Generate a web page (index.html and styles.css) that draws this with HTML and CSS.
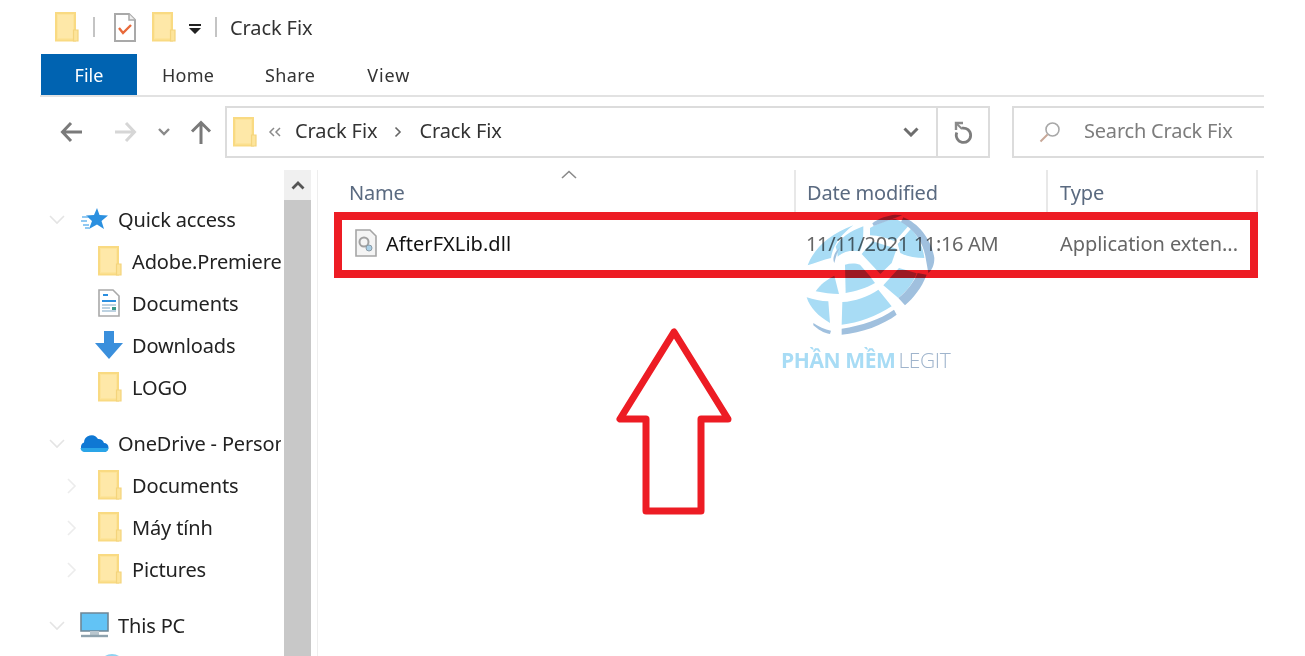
FILE: index.html
```html
<!DOCTYPE html>
<html lang="en">
<head>
  <meta charset="UTF-8">
  <meta name="viewport" content="width=device-width, initial-scale=1.0">
  <title>Crack Fix</title>
  <link rel="stylesheet" href="styles.css">
</head>
<body>
  <svg class="defs" width="0" height="0">
    <symbol id="folder" viewBox="0 0 24 30">
      <path d="M1 1H20V28.500H1Z" fill="#fde49a" stroke="#f9da82" stroke-width="2"/>
      <path d="M3 3H18V26H3Z" fill="#fee8a8"/>
      <path d="M18.500 18H23V29H18.500Z" fill="#fde49a" stroke="#f4d47c" stroke-width="1.200"/>
    </symbol>
  </svg>

  <div class="window">
    <div class="titlebar">
      <svg class="folder-icon qa-first"><use href="#folder"/></svg>
      <span class="qa-sep"></span>
      <svg class="qa-doc" width="22" height="29" viewBox="0 0 22 29">
        <path d="M1 1H15L21 7V28H1Z" fill="#fff" stroke="#a9a9a9" stroke-width="2"/>
        <path d="M15 1V7H21" fill="#eee" stroke="#a9a9a9" stroke-width="1.5"/>
        <path d="M5 15L9 20L17 12" fill="none" stroke="#e8693a" stroke-width="2.4"/>
      </svg>
      <svg class="folder-icon qa-second"><use href="#folder"/></svg>
      <svg class="qa-drop" width="12" height="11" viewBox="0 0 12 11">
        <path d="M0 0H12V2H0Z M0 4H12L6 10Z" fill="#222"/>
      </svg>
      <span class="qa-sep qa-sep-last"></span>
      <span class="title-text">Crack Fix</span>
    </div>

    <div class="tabs">
      <span class="tab tab-file">File</span>
      <span class="tab tab-home">Home</span>
      <span class="tab tab-share">Share</span>
      <span class="tab tab-view">View</span>
    </div>

    <div class="navbar">
      <div class="nav-buttons">
        <svg width="24" height="22" viewBox="0 0 24 22"><path d="M22 11H3M11 2L2.500 11L11 20" fill="none" stroke="#7a7a7a" stroke-width="3"/></svg>
        <svg class="nav-forward" width="24" height="22" viewBox="0 0 24 22"><path d="M2 11H21M13 2L21.500 11L13 20" fill="none" stroke="#d6d6d6" stroke-width="3"/></svg>
        <svg class="nav-recent" width="12" height="8" viewBox="0 0 12 8"><path d="M1 1L6 6L11 1" fill="none" stroke="#8a8a8a" stroke-width="2.400"/></svg>
        <svg class="nav-up" width="22" height="24" viewBox="0 0 22 24"><path d="M11 24V3M2 11.500L11 2.500L20 11.500" fill="none" stroke="#7a7a7a" stroke-width="3"/></svg>
      </div>
      <div class="address">
        <svg class="folder-icon"><use href="#folder"/></svg>
        <span class="crumb-more">
          <svg width="14" height="10" viewBox="0 0 14 10"><path d="M6 1L2 5L6 9M12 1L8 5L12 9" fill="none" stroke="#8a8a8a" stroke-width="1.500"/></svg>
        </span>
        <span class="crumb">Crack Fix</span>
        <svg class="crumb-arrow" width="8" height="12" viewBox="0 0 8 12"><path d="M1.500 1.500L6 6L1.500 10.500" fill="none" stroke="#666" stroke-width="1.600"/></svg>
        <span class="crumb">Crack Fix</span>
        <svg class="address-drop" width="16" height="10" viewBox="0 0 16 10"><path d="M1.500 1.500L8 8L14.500 1.500" fill="none" stroke="#6d6d6d" stroke-width="3"/></svg>
        <span class="refresh">
          <svg width="20" height="23" viewBox="0 0 20 23">
            <path d="M9 7.200A7.200 7.200 0 1 1 3.800 11.500" fill="none" stroke="#7d7d7d" stroke-width="2.800"/>
            <path d="M3 9V2H10" fill="none" stroke="#8a8a8a" stroke-width="2.400"/>
            <path d="M3.500 2.500L9 8" stroke="#8a8a8a" stroke-width="2"/>
          </svg>
        </span>
      </div>
      <div class="search">
        <svg width="22" height="22" viewBox="0 0 22 22">
          <circle cx="13.500" cy="8.500" r="6.500" fill="none" stroke="#a8a8a8" stroke-width="1.600"/>
          <path d="M8.500 13.500L1.500 20.500" stroke="#c8a898" stroke-width="2"/>
        </svg>
        <span>Search Crack Fix</span>
      </div>
    </div>

    <div class="content">
      <div class="sidebar">
        <div class="tree">
          <div class="tree-row group">
            <svg class="twisty" width="16" height="10" viewBox="0 0 16 10"><path d="M1 1L8 8L15 1" fill="none" stroke="#e4e4e4" stroke-width="1.600"/></svg>
            <svg class="root-icon" width="29" height="24" viewBox="0 0 29 24">
              <path d="M17 1L19.500 8L28 8.500L21.500 14L24 22L17 17.500L9 22L12 14L6 8.500L14 8Z" fill="#2b90e0"/>
              <path d="M2 10H8M1 14H7M3 18H9M5 21H9" stroke="#6db8ee" stroke-width="1.400"/>
            </svg>
            <span>Quick access</span>
          </div>
          <div class="tree-row child">
            <svg class="folder-icon"><use href="#folder"/></svg>
            <span>Adobe.Premiere</span>
          </div>
          <div class="tree-row child">
            <svg class="child-icon" width="22" height="28" viewBox="0 0 22 28">
              <path d="M1 1H15L21 7V27H1Z" fill="#fff" stroke="#a9a9a9" stroke-width="1.600"/>
              <path d="M5 6H10M4 12H18" stroke="#2b8fe0" stroke-width="2"/>
              <path d="M4 16H18M4 19H12M4 22H18" stroke="#a8c4d8" stroke-width="1.400"/>
              <path d="M14 18H18V21H14Z" fill="#3b9a8a"/>
            </svg>
            <span>Documents</span>
          </div>
          <div class="tree-row child">
            <svg class="child-icon arrow-icon" width="28" height="28" viewBox="0 0 28 28">
              <path d="M9 0H19V12H28L14 28L0 12H9Z" fill="#3a8fdc"/>
            </svg>
            <span>Downloads</span>
          </div>
          <div class="tree-row child">
            <svg class="folder-icon"><use href="#folder"/></svg>
            <span>LOGO</span>
          </div>
          <div class="tree-row group group-gap">
            <svg class="twisty" width="16" height="10" viewBox="0 0 16 10"><path d="M1 1L8 8L15 1" fill="none" stroke="#e4e4e4" stroke-width="1.600"/></svg>
            <svg class="root-icon" width="29" height="20" viewBox="0 0 29 20">
              <path d="M5 19A5 5 0 0 1 4 9.500A7.500 7.500 0 0 1 18 6A6 6 0 0 1 24 10A4.500 4.500 0 0 1 24 19Z" fill="#0f78d4"/>
              <path d="M0.500 15A4.500 4.500 0 0 0 5 19H24A4.500 4.500 0 0 0 28.500 15Z" fill="#2aa5e8"/>
            </svg>
            <span>OneDrive - Personal</span>
          </div>
          <div class="tree-row child">
            <svg class="twisty-child" width="10" height="16" viewBox="0 0 10 16"><path d="M1 1L8 8L1 15" fill="none" stroke="#ececec" stroke-width="1.600"/></svg>
            <svg class="folder-icon"><use href="#folder"/></svg>
            <span>Documents</span>
          </div>
          <div class="tree-row child">
            <svg class="twisty-child" width="10" height="16" viewBox="0 0 10 16"><path d="M1 1L8 8L1 15" fill="none" stroke="#ececec" stroke-width="1.600"/></svg>
            <svg class="folder-icon"><use href="#folder"/></svg>
            <span>Máy tính</span>
          </div>
          <div class="tree-row child">
            <svg class="twisty-child" width="10" height="16" viewBox="0 0 10 16"><path d="M1 1L8 8L1 15" fill="none" stroke="#ececec" stroke-width="1.600"/></svg>
            <svg class="folder-icon"><use href="#folder"/></svg>
            <span>Pictures</span>
          </div>
          <div class="tree-row group group-gap">
            <svg class="twisty" width="16" height="10" viewBox="0 0 16 10"><path d="M1 1L8 8L15 1" fill="none" stroke="#e4e4e4" stroke-width="1.600"/></svg>
            <svg class="root-icon" width="29" height="27" viewBox="0 0 29 27">
              <path d="M1 1H28V19H1Z" fill="#62c3f5" stroke="#6f8796" stroke-width="1.600"/>
              <path d="M10 19H19V23H10Z" fill="#b9c6ce"/>
              <path d="M1 24H28" stroke="#8ea2ae" stroke-width="2.400"/>
            </svg>
            <span>This PC</span>
          </div>
          <div class="tree-row child">
            <svg class="child-icon" width="28" height="28" viewBox="0 0 28 28"><circle cx="14" cy="14" r="13" fill="#8fd3f2"/></svg>
          </div>
        </div>
        <div class="scrollbar">
          <div class="scroll-up">
            <svg width="14" height="9" viewBox="0 0 14 9"><path d="M1.500 7.500L7 2L12.500 7.500" fill="none" stroke="#555" stroke-width="2.800"/></svg>
          </div>
        </div>
      </div>

      <div class="files">
        <div class="sort-caret">
          <svg width="16" height="9" viewBox="0 0 16 9"><path d="M1 8L8 1.500L15 8" fill="none" stroke="#8a8a8a" stroke-width="1.600"/></svg>
        </div>
        <div class="file-head">
          <span class="col col-name">Name</span>
          <span class="col col-date">Date modified</span>
          <span class="col col-type">Type</span>
        </div>
        <div class="file-row">
          <span class="col col-name file-name">
            <svg width="22" height="28" viewBox="0 0 22 28">
              <path d="M1 1H15L21 7V27H1Z" fill="#f4f4f4" stroke="#a5a5a5" stroke-width="1.600"/>
              <circle cx="9" cy="13" r="4.500" fill="none" stroke="#a0a0a0" stroke-width="2"/>
              <circle cx="14" cy="19" r="3" fill="#a9cfe6" stroke="#8a9aa6"/>
            </svg>
            AfterFXLib.dll
          </span>
          <span class="col col-date">11/11/2021 11:16 AM</span>
          <span class="col col-type">Application exten...</span>
        </div>
      </div>
    </div>
  </div>

  <div class="highlight"></div>

  <svg class="big-arrow" width="118" height="190" viewBox="0 0 118 190">
    <path d="M59 5L5 92H31V184H86V92H113Z" fill="none" stroke="#ed1c24" stroke-width="7" stroke-linejoin="round"/>
  </svg>

  <div class="watermark">
    <svg width="140" height="130" viewBox="0 0 420 390">
      <g fill="#a8dcf5">
        <path d="M38 172C55 125 100 80 175 52C145 75 115 105 108 150C85 155 60 165 38 172Z"/>
        <path d="M122 116C135 90 165 70 205 55C205 80 205 110 195 130C170 125 145 130 128 146C128 136 125 126 122 116Z"/>
        <path d="M225 60C250 45 280 35 300 32L342 52L300 100C275 90 250 82 225 82Z"/>
        <path d="M308 108L348 62C370 85 385 120 388 150C360 150 335 145 316 135Z"/>
        <path d="M200 138L232 100L305 122L290 165L256 198Z"/>
        <path d="M265 232L312 180L365 196C355 225 335 250 310 270Z"/>
        <path d="M150 170C165 165 182 165 195 170L225 205L240 225C215 240 180 250 152 255Z"/>
        <path d="M62 250C75 230 95 215 118 203L132 258C110 258 85 255 62 250Z"/>
        <path d="M35 268C55 275 78 280 100 280L105 345C70 325 45 300 35 268Z"/>
        <path d="M142 282C180 280 220 265 250 245L290 295C245 325 190 345 140 350Z"/>
      </g>
      <g fill="#a0c0de">
        <path d="M325 28C370 45 410 95 418 150C418 170 412 185 400 195L392 150C385 105 360 65 318 42Z"/>
        <path d="M368 195L395 200C380 240 355 270 330 292L310 270C335 250 355 225 368 195Z"/>
        <path d="M140 362C200 352 255 335 297 305L305 320C265 350 200 375 140 380Z"/>
        <path d="M55 345C70 355 90 365 108 368L105 378C85 375 70 365 55 352Z"/>
        <path d="M232 46C250 30 280 22 300 20L322 22L306 28L236 54Z"/>
        <path d="M135 118C115 135 112 155 118 165C122 150 125 135 135 118Z"/>
      </g>
    </svg>
    <div class="wm-text"><b>PHẦN MỀM</b><span>LEGIT</span></div>
  </div>
</body>
</html>
```

FILE: styles.css
```css
html, body {
  margin: 0;
  height: 656px;
  overflow: hidden;
  background-color: white;
}
body {
  font-family: "Noto Sans", "Open Sans", sans-serif;
  color: #222;
  position: relative;
}
.defs {
  position: absolute;
}
.window {
  margin-left: 40px;
  width: 1224px;
  height: 656px;
  overflow: hidden;
  filter: blur(0.4px);
}
.folder-icon {
  width: 24px;
  height: 30px;
  flex: none;
}

/* title bar */
.titlebar {
  height: 54px;
  display: flex;
  align-items: center;
  font-size: 20px;
}
.qa-first {
  margin-left: 15px;
}
.qa-sep {
  width: 2px;
  height: 20px;
  background-color: #c4c4c4;
  margin-left: 14px;
}
.qa-doc {
  margin-left: 19px;
}
.qa-second {
  margin-left: 16px;
}
.qa-drop {
  margin-left: 13px;
  margin-top: 4px;
}
.qa-sep-last {
  margin-left: 14px;
}
.title-text {
  margin-left: 13px;
  letter-spacing: -0.1px;
  color: #333;
}

/* ribbon tabs */
.tabs {
  height: 41px;
  border-bottom: 2px solid #e2e2e2;
  display: flex;
  align-items: center;
  font-size: 18px;
  color: #333;
}
.tab-file {
  width: 96px;
  height: 41px;
  margin-left: 1px;
  background-color: #0063b1;
  color: white;
  display: flex;
  justify-content: center;
  align-items: center;
}
.tab-home {
  margin-left: 25px;
  letter-spacing: 0.2px;
}
.tab-share {
  margin-left: 51px;
  letter-spacing: 0.4px;
}
.tab-view {
  margin-left: 52px;
  letter-spacing: 0.9px;
}

/* navigation row */
.navbar {
  height: 72px;
  display: flex;
  align-items: center;
  margin-top: -1px;
  font-size: 20px;
}
.nav-buttons {
  width: 185px;
  flex: none;
  display: flex;
  align-items: center;
  padding-left: 20px;
  box-sizing: border-box;
}
.nav-forward {
  margin-left: 29px;
}
.nav-recent {
  margin-left: 21px;
}
.nav-up {
  margin-left: 20px;
}
.address {
  width: 765px;
  height: 52px;
  flex: none;
  box-sizing: border-box;
  border: 2px solid #dcdcdc;
  display: flex;
  align-items: center;
  padding-left: 6px;
  letter-spacing: -0.1px;
  color: #333;
}
.crumb {
  margin-top: -4px;
}
.crumb-more {
  display: flex;
  margin: 0 13px 0 11px;
}
.crumb-arrow {
  margin: 0 17px 0 17px;
}
.address-drop {
  margin-left: auto;
  margin-right: 17px;
}
.refresh {
  width: 50px;
  height: 48px;
  border-left: 2px solid #dcdcdc;
  display: flex;
  justify-content: center;
  align-items: center;
}
.search {
  width: 260px;
  height: 52px;
  margin-left: 22px;
  flex: none;
  box-sizing: border-box;
  border: 2px solid #dcdcdc;
  display: flex;
  align-items: center;
  padding-left: 25px;
  letter-spacing: -0.2px;
  color: #7d7d7d;
}
.search span {
  margin-left: 23px;
  margin-top: -4px;
}

/* main area */
.content {
  display: flex;
  height: 600px;
  margin-top: 2px;
  font-size: 20px;
}
.sidebar {
  width: 277px;
  flex: none;
  display: flex;
  border-right: 1px solid #eeeeee;
}
.tree {
  width: 241px;
  margin-right: 3px;
  flex: none;
  overflow: hidden;
  padding-top: 28px;
}
.tree-row {
  height: 42px;
  display: flex;
  align-items: center;
  white-space: nowrap;
  position: relative;
  letter-spacing: -0.15px;
  color: #222;
}
.group {
  padding-left: 40px;
}
.group-gap {
  margin-top: 14px;
}
.child {
  padding-left: 58px;
}
.child span {
  position: absolute;
  left: 92px;
}
.group span {
  position: absolute;
  left: 78px;
}
.twisty {
  position: absolute;
  left: 9px;
  top: 17px;
}
.twisty-child {
  position: absolute;
  left: 27px;
  top: 14px;
}
.child-icon {
  flex: none;
}
.arrow-icon {
  margin-left: -3px;
}
.scrollbar {
  width: 27px;
  flex: none;
  background-color: #c8c8c8;
}
.scroll-up {
  height: 30px;
  background-color: #f0f0f0;
  display: flex;
  justify-content: center;
  align-items: center;
}

/* file list */
.files {
  width: 941px;
  position: relative;
  color: #666;
}
.sort-caret {
  position: absolute;
  left: 243px;
  top: 0;
  display: flex;
}
.file-head {
  height: 42px;
  display: flex;
  align-items: stretch;
  letter-spacing: -0.2px;
  color: #5a6a80;
  padding-left: 20px;
}
.file-head .col {
  display: flex;
  align-items: center;
  padding-top: 3px;
  box-sizing: border-box;
  border-right: 2px solid #e8e8e8;
}
.file-head .col-name {
  width: 458px;
  padding-left: 11px;
}
.file-row {
  height: 62px;
  display: flex;
  align-items: center;
  padding-left: 20px;
  letter-spacing: -0.35px;
}
.col-name {
  width: 458px;
  flex: none;
}
.col-date {
  width: 252px;
  flex: none;
  padding-left: 10px;
  box-sizing: border-box;
}
.file-head .col-date {
  padding-left: 11px;
}
.col-type {
  width: 210px;
  flex: none;
  padding-left: 12px;
  box-sizing: border-box;
  letter-spacing: -0.05px;
}
.file-name {
  display: flex;
  align-items: center;
  gap: 9px;
  padding-left: 17px;
  box-sizing: border-box;
  color: #111;
  letter-spacing: 0.05px;
}

/* annotations on top of the screenshot */
.highlight {
  position: absolute;
  left: 334px;
  top: 212px;
  width: 924px;
  height: 66px;
  box-sizing: border-box;
  border: 8px solid #ed1c24;
}
.big-arrow {
  position: absolute;
  left: 615px;
  top: 327px;
}
.watermark {
  position: absolute;
  left: 795px;
  top: 208px;
  width: 170px;
  mix-blend-mode: multiply;
}
.watermark svg {
  display: block;
}
.wm-text {
  margin-top: 8px;
  margin-left: -14px;
  font-family: "Open Sans", sans-serif;
  font-size: 21px;
  letter-spacing: -0.4px;
  white-space: nowrap;
}
.wm-text b {
  color: #a8dcf5;
}
.wm-text span {
  margin-left: 3px;
  font-weight: 300;
  color: #9fb4cc;
}
```
